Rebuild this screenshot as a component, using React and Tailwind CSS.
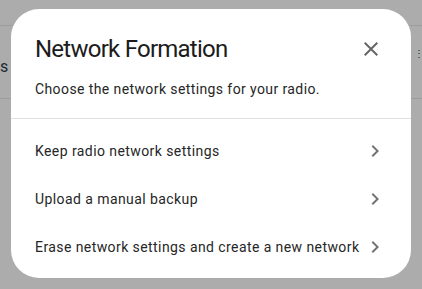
import React from "react";

const Chevron = () => (
  <svg width="24" height="24" viewBox="0 0 24 24" className="text-[#737373]">
    <path d="M8.59 16.58L13.17 12L8.59 7.41L10 6l6 6l-6 6z" fill="currentColor" />
  </svg>
);

const items = [
  "Keep radio network settings",
  "Upload a manual backup",
  "Erase network settings and create a new network",
];

export default function App() {
  return (
    <div className="relative w-[422px] h-[289px] overflow-hidden bg-[#acacac] font-['Roboto',sans-serif]">
      {/* page behind the scrim */}
      <div className="h-[26px] border-b border-[#9c9c9c]" />
      <div className="h-[73px] border-b border-[#9c9c9c] flex items-center justify-between">
        <span className="text-[16px] text-[#1c2a36] ml-[-4px] mt-[10px]">is</span>
        <span className="text-[10px] text-[#1c2a36] mr-[-2px] mt-[-16px] leading-[8px]">⋮</span>
      </div>

      {/* dialog */}
      <div className="absolute left-[11px] top-[9px] w-[400px] h-[269px] rounded-[28px] bg-white flex flex-col">
        <div className="flex items-start justify-between pl-6 pr-[20px] pt-[24px]">
          <h2 className="text-[24px] leading-[32px] tracking-[-0.75px] text-[#1c1c1c]">Network Formation</h2>
          <button className="w-[40px] h-[40px] flex items-center justify-center mt-[-4px] text-[#666]">
            <svg width="24" height="24" viewBox="0 0 24 24">
              <path d="M19 6.41L17.59 5L12 10.59L6.41 5L5 6.41L10.59 12L5 17.59L6.41 19L12 13.41L17.59 19L19 17.59L13.41 12z" fill="currentColor" />
            </svg>
          </button>
        </div>
        <p className="px-6 mt-[10px] text-[14px] leading-[20px] tracking-[0.4px] text-[#262626]">
          Choose the network settings for your radio.
        </p>
        <div className="mt-[19px] border-t border-[#e0e0e0]" />
        <ul className="pt-[8px]">
          {items.map((t) => (
            <li key={t} className="h-[48px] flex items-center justify-between pl-6 pr-[24px]">
              <span className="text-[14px] tracking-[0.42px] text-[#262626]">{t}</span>
              <Chevron />
            </li>
          ))}
        </ul>
      </div>
    </div>
  );
}
